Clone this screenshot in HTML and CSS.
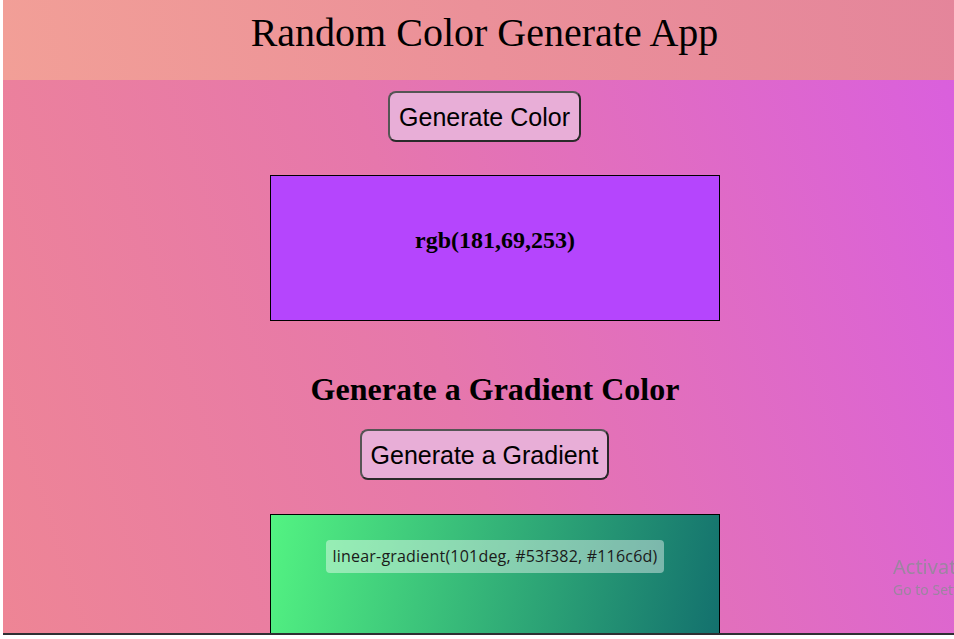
FILE: index.html
```html
<!DOCTYPE html>
<html lang="en">
<head>
<meta charset="utf-8">
<title>Random Color Generate App</title>
<link rel="stylesheet" href="styles.css">
</head>
<body>
  <div class="app">
    <header class="header">
      <h1 class="title">Random Color Generate App</h1>
    </header>
    <main class="main">
      <button class="btn btn-color">Generate Color</button>
      <div class="color-box shift" style="background-color: rgb(181,69,253);">
        <h3 class="color-value">rgb(181,69,253)</h3>
      </div>
      <h2 class="section-title shift">Generate a Gradient Color</h2>
      <button class="btn btn-gradient">Generate a Gradient</button>
      <div class="gradient-box shift" style="background: linear-gradient(101deg, #53f382, #116c6d);">
        <span class="gradient-value">linear-gradient(101deg, #53f382, #116c6d)</span>
      </div>
    </main>
  </div>
  <div class="watermark">
    <div class="wm-title">Activate Windows</div>
    <div class="wm-sub">Go to Settings to activate Windows.</div>
  </div>
</body>
</html>
```
FILE: styles.css
```css
html, body {
  margin: 0;
  padding: 0;
  background: #ffffff;
  overflow: hidden;
}

body {
  padding-left: 3px;
  width: 951px;
  height: 639px;
}

.app {
  width: 963px;
  height: 633px;
  overflow: hidden;
  border-bottom: 2px solid #2f2f33;
  background: linear-gradient(72deg, #ee8595 0%, #e677ac 45%, #d95ee0 100%);
  font-family: "Liberation Serif", "Times New Roman", serif;
  color: #000;
}

.header {
  height: 80px;
  box-sizing: border-box;
  padding-top: 10px;
  background: linear-gradient(80deg, #f29f97 0%, #eb9099 50%, #e4859b 100%);
  text-align: center;
}

.title {
  margin: 0;
  font-size: 40px;
  font-weight: normal;
  line-height: 46px;
}

.main {
  display: flex;
  flex-direction: column;
  align-items: center;
}

.btn {
  font-family: "Liberation Sans", Arial, sans-serif;
  font-size: 25px;
  line-height: 28px;
  color: #000;
  background: #e8aed7;
  border: 2px solid #2a2a2a;
  border-top-color: #555;
  border-left-color: #555;
  border-radius: 8px;
  padding: 10px 9px 9px;
  cursor: pointer;
}

.btn-color {
  margin-top: 11px;
}

.color-box {
  margin-top: 33px;
  width: 448px;
  height: 144px;
  border: 1px solid #000;
  box-sizing: content-box;
  text-align: center;
}

.color-value {
  margin: 0;
  padding-top: 50px;
  font-size: 24px;
  font-weight: bold;
  line-height: 28px;
}

.section-title {
  margin-top: 50px;
  margin-bottom: 0;
  font-size: 32px;
  font-weight: bold;
  line-height: 37px;
}

.btn-gradient {
  margin-top: 21px;
}

.gradient-box {
  margin-top: 34px;
  width: 448px;
  height: 180px;
  border: 1px solid #000;
  display: flex;
  justify-content: center;
  align-items: flex-start;
  padding-top: 25px;
  box-sizing: content-box;
}

.gradient-value {
  font-family: "Open Sans", "Noto Sans", sans-serif;
  font-size: 16px;
  letter-spacing: 0.2px;
  line-height: 21px;
  color: #1a1a1a;
  background: rgba(255, 255, 255, 0.42);
  border-radius: 4px;
  padding: 6px 7px;
}

.shift {
  margin-left: 21px;
}

.watermark {
  position: fixed;
  left: 893px;
  top: 554px;
  white-space: nowrap;
  font-family: "Noto Sans", "Open Sans", sans-serif;
  color: rgba(140, 140, 150, 0.8);
}

.wm-title {
  font-size: 20px;
  line-height: 26px;
}

.wm-sub {
  font-size: 14px;
  line-height: 20px;
}
```
